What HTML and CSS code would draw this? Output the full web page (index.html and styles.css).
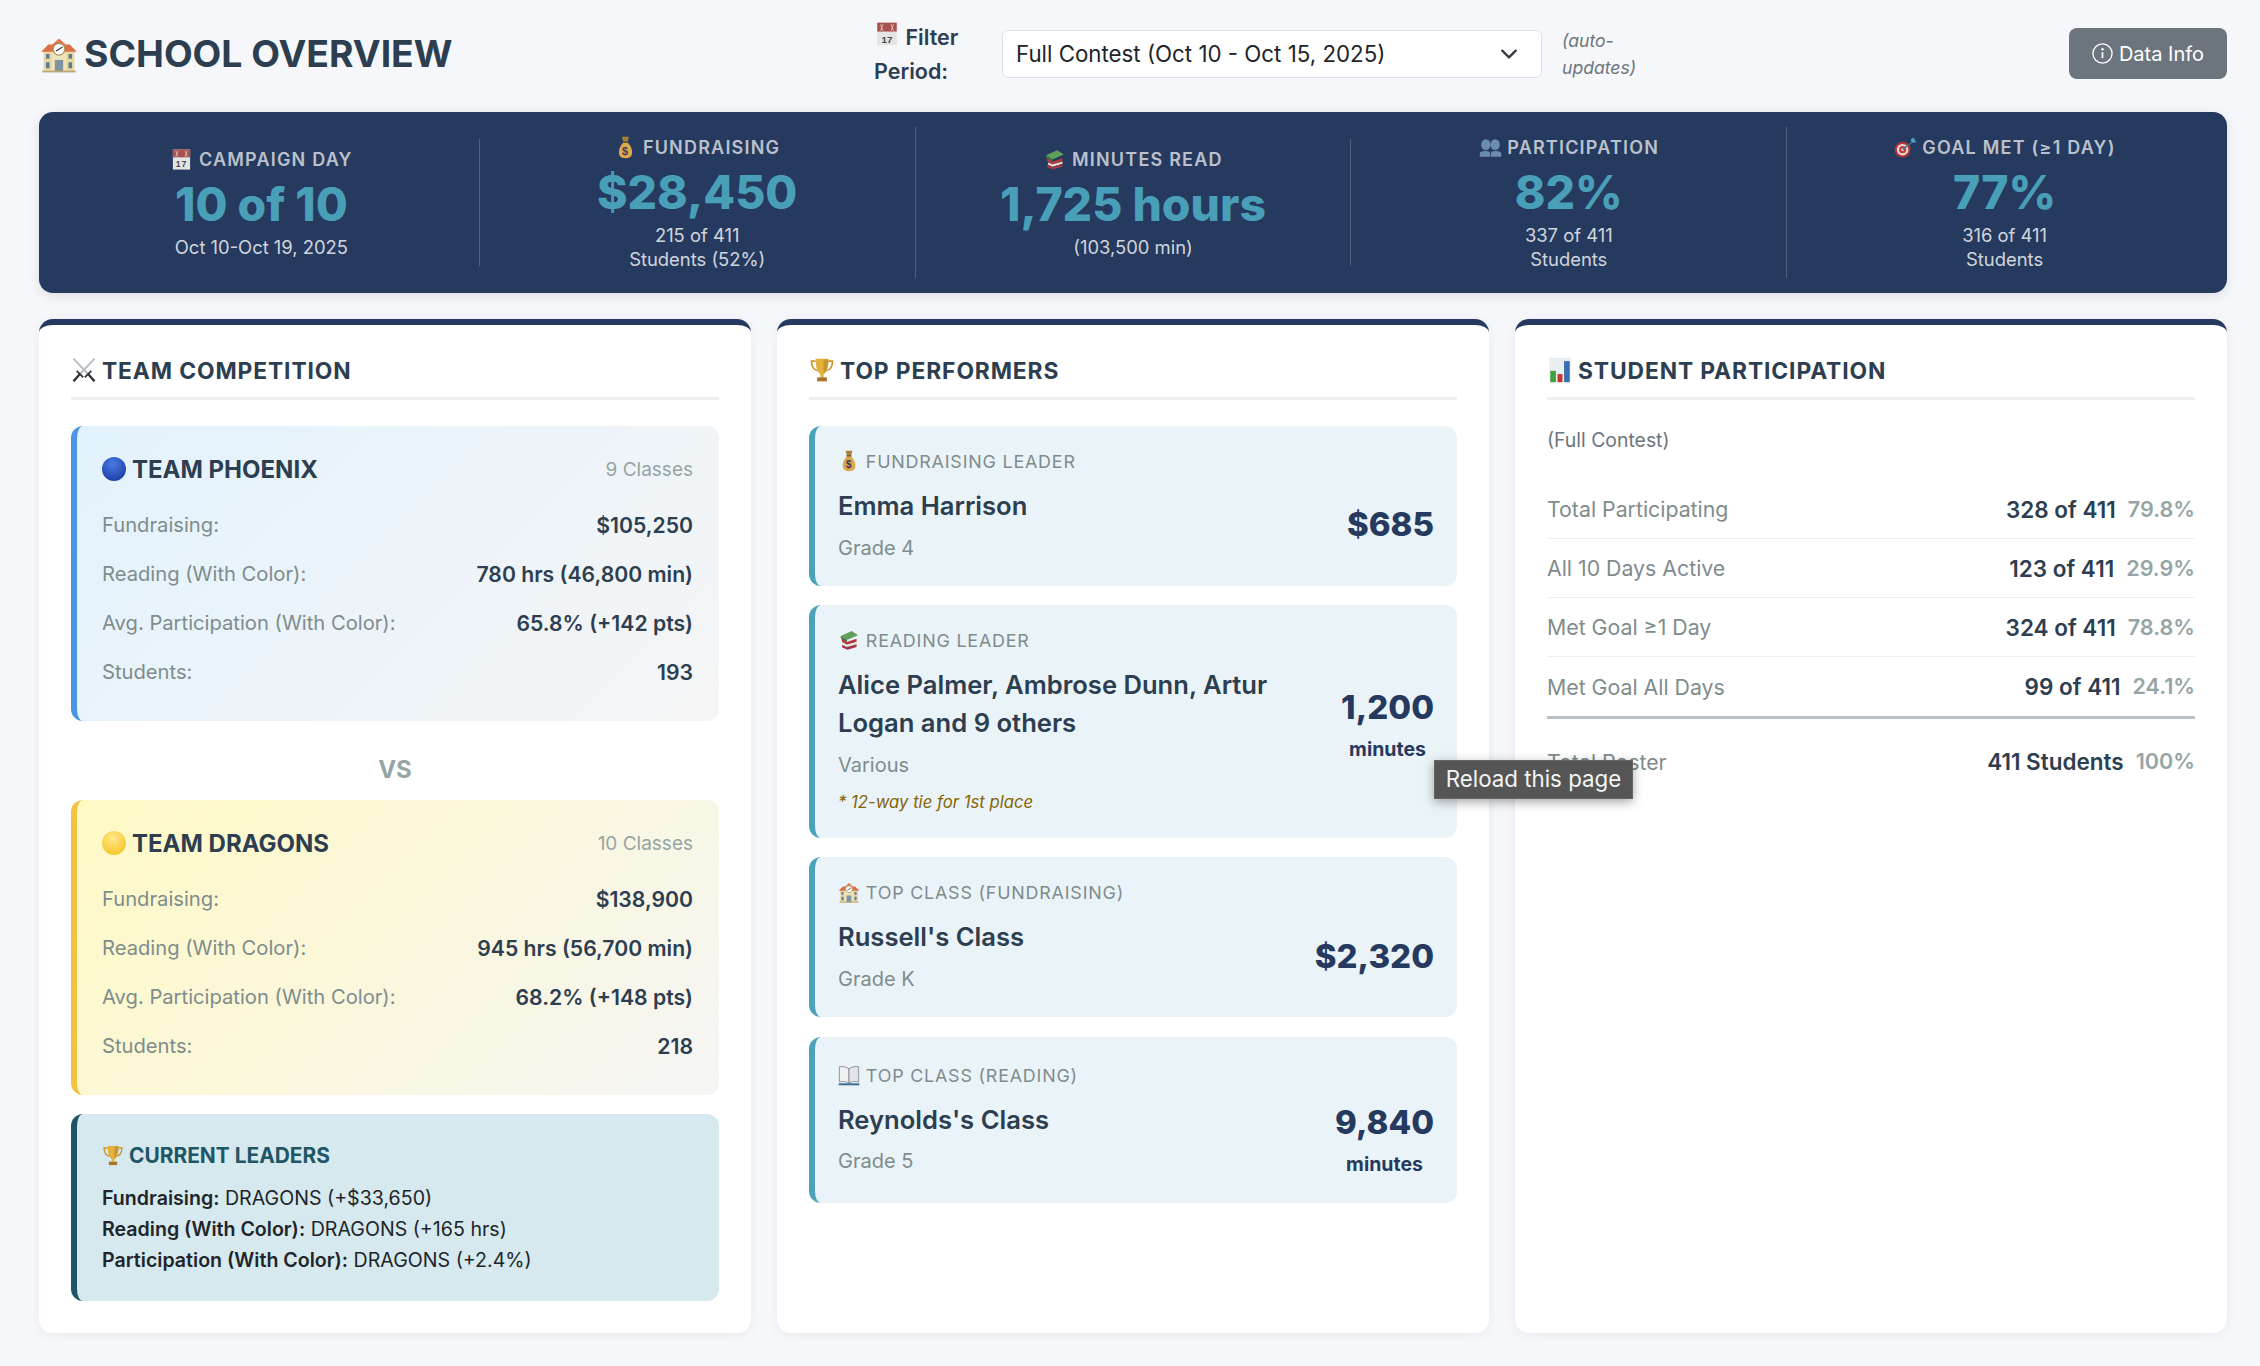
FILE: index.html
```html
<!DOCTYPE html>
<html lang="en">
<head>
  <meta charset="UTF-8">
  <title>School Overview</title>
  <link rel="stylesheet" href="styles.css">
</head>
<body>

<svg class="sprite" xmlns="http://www.w3.org/2000/svg">
  <symbol id="i-school" viewBox="0 0 32 32">
    <rect x="3" y="13" width="26" height="18" fill="#e8d9a4"/>
    <rect x="10" y="9" width="12" height="22" fill="#f0e4ba"/>
    <path d="M1 14 L7 8 H25 L31 14 Z" fill="#dc6f45"/>
    <path d="M8 10 L16 3 L24 10 Z" fill="#e07a4e"/>
    <circle cx="16" cy="12" r="5" fill="#fff" stroke="#a88f58"/>
    <path d="M16 12 L19 10 M16 12 L13.500 13.500" stroke="#333" stroke-width="1"/>
    <path d="M5 16h3v4H5zM5 23h3v5H5zM24 16h3v4h-3zM24 23h3v5h-3z" fill="#5f7d92"/>
    <rect x="12.500" y="21" width="7" height="10" fill="#7f93a0"/>
    <rect x="2" y="30" width="28" height="1.500" fill="#b9a874"/>
  </symbol>
  <symbol id="i-calendar" viewBox="0 0 32 32">
    <rect x="4" y="2" width="24" height="28" fill="#e4e4e4"/>
    <rect x="4" y="2" width="24" height="11" fill="#a8524f"/>
    <path d="M8 12 L11 4 M11 12 L8 4 M21 12 L24 4 M24 12 L21 4" stroke="#e8c9c6" stroke-width="1"/>
    <text x="16" y="26.500" font-size="12" text-anchor="middle" fill="#444" font-family="Liberation Sans">17</text>
  </symbol>
  <symbol id="i-bag" viewBox="0 0 32 32">
    <path d="M11 1 L21 1 L19 8 L13 8 Z" fill="#a9803a"/>
    <path d="M13 9 H19 C24 14 26 20 25 25 C24 29 21 31 16 31 C11 31 8 29 7 25 C6 20 8 14 13 9 Z" fill="#d9a94a"/>
    <rect x="12.500" y="7.500" width="7" height="2" fill="#6f5226"/>
    <text x="16" y="26" font-size="15" font-weight="700" text-anchor="middle" fill="#3a3f5c" font-family="Liberation Sans">$</text>
  </symbol>
  <symbol id="i-books" viewBox="0 0 32 32">
    <path d="M4 10 L20 3 L29 9 L13 16 Z" fill="#5fa05a"/>
    <path d="M4 10 L13 16 V19 L4 13 Z" fill="#2f7a46"/>
    <path d="M5 13 L13 19 L27 14 V19 L13 23 L6 19 Z" fill="#b5393a"/>
    <path d="M7 20 L13 23 L27 19 V22 L13 26 L7 23 Z" fill="#ece8e2"/>
    <path d="M6 23 L13 26 L27 22 V26 L14 30 L6 27 Z" fill="#9c3a4c"/>
  </symbol>
  <symbol id="i-people" viewBox="0 0 32 32">
    <g fill="#6b8bb0">
      <ellipse cx="9.500" cy="12" rx="6.500" ry="7.500"/>
      <path d="M1 29 V25 C1 22 5 21 9.500 21 C14 21 15.500 22 15.500 25 V29 Z"/>
      <ellipse cx="22.500" cy="12" rx="6.500" ry="7.500"/>
      <path d="M16.500 29 V25 C16.500 22 18 21 22.500 21 C27 21 31 22 31 25 V29 Z"/>
    </g>
  </symbol>
  <symbol id="i-dart" viewBox="0 0 32 32">
    <circle cx="12" cy="19" r="11" fill="#b8333a"/>
    <circle cx="12" cy="19" r="8" fill="#ecdcd8"/>
    <circle cx="12" cy="19" r="5" fill="#c23a3a"/>
    <circle cx="12" cy="19" r="2" fill="#f0e8e6"/>
    <path d="M12 19 L26 8" stroke="#45748a" stroke-width="2"/>
    <path d="M23 5 L25 9 L31 9 L27 2 Z" fill="#4f9fbd"/>
  </symbol>
  <symbol id="i-swords" viewBox="0 0 32 32">
    <path d="M3 2 L21 21 M29 2 L11 21" stroke="#b9bfc6" stroke-width="2.600"/>
    <path d="M17 25 L25 17 M15 25 L7 17" stroke="#33373c" stroke-width="2.200"/>
    <path d="M21 21 L29 30 M11 21 L3 30" stroke="#33373c" stroke-width="2.800"/>
  </symbol>
  <symbol id="i-trophy" viewBox="0 0 32 32">
    <path d="M8 5 H3 C3 12 6 16 11 17 M24 5 H29 C29 12 26 16 21 17" fill="none" stroke="#c8962e" stroke-width="2"/>
    <path d="M8 2 H24 C24 13 21 19 18 21 V25 H14 V21 C11 19 8 13 8 2 Z" fill="#e3b23c"/>
    <path d="M18 3 H24 C24 13 21 19 18 21 Z" fill="#c8962e"/>
    <rect x="10" y="25" width="12" height="5" fill="#a8742a"/>
  </symbol>
  <symbol id="i-chart" viewBox="0 0 32 32">
    <rect x="3" y="1" width="26" height="30" fill="#e8eef2"/>
    <rect x="4" y="17" width="7" height="14" fill="#45a142"/>
    <rect x="13" y="21" width="6" height="10" fill="#c8352c"/>
    <rect x="21" y="5" width="7" height="26" fill="#3a6fb0"/>
  </symbol>
  <symbol id="i-open-book" viewBox="0 0 32 32">
    <path d="M1 28 H31 V31 H1 Z" fill="#3f6f9a"/>
    <path d="M2 4 C7 3 12 4 16 7 V28 C12 25 7 25 2 26 Z" fill="#eef0f2" stroke="#6a7078"/>
    <path d="M30 4 C25 3 20 4 16 7 V28 C20 25 25 25 30 26 Z" fill="#e2e4e8" stroke="#6a7078"/>
  </symbol>
</svg>

<header class="topbar">
  <h1 class="page-title"><svg class="icon icon-title"><use href="#i-school"/></svg>SCHOOL OVERVIEW</h1>
  <div class="filter">
    <label class="filter-label" for="period"><svg class="icon icon-filter"><use href="#i-calendar"/></svg> Filter Period:</label>
    <div class="select-wrap">
      <select id="period" class="period-select">
        <option>Full Contest (Oct 10 - Oct 15, 2025)</option>
      </select>
      <svg class="chevron" viewBox="0 0 16 16"><path d="M2 5l6 6 6-6" fill="none" stroke="#343a40" stroke-width="2" stroke-linecap="round" stroke-linejoin="round"/></svg>
    </div>
    <small class="filter-note">(auto-updates)</small>
  </div>
  <button class="info-btn">
    <svg class="info-icon" viewBox="0 0 16 16"><circle cx="8" cy="8" r="7.300" fill="none" stroke="currentColor" stroke-width="1"/><path d="M8 7v4.500" stroke="currentColor" stroke-width="1.300"/><circle cx="8" cy="4.800" r=".9" fill="currentColor"/></svg>
    Data Info
  </button>
</header>

<section class="stats">
  <div class="stat">
    <div class="stat-label"><svg class="icon"><use href="#i-calendar"/></svg> CAMPAIGN DAY</div>
    <div class="stat-value">10 of 10</div>
    <div class="stat-sub">Oct 10-Oct 19, 2025</div>
  </div>
  <div class="stat">
    <div class="stat-label"><svg class="icon"><use href="#i-bag"/></svg> FUNDRAISING</div>
    <div class="stat-value">$28,450</div>
    <div class="stat-sub">215 of 411<br>Students (52%)</div>
  </div>
  <div class="stat">
    <div class="stat-label"><svg class="icon"><use href="#i-books"/></svg> MINUTES READ</div>
    <div class="stat-value">1,725 hours</div>
    <div class="stat-sub">(103,500 min)</div>
  </div>
  <div class="stat">
    <div class="stat-label"><svg class="icon"><use href="#i-people"/></svg> PARTICIPATION</div>
    <div class="stat-value">82%</div>
    <div class="stat-sub">337 of 411<br>Students</div>
  </div>
  <div class="stat">
    <div class="stat-label"><svg class="icon"><use href="#i-dart"/></svg> GOAL MET (≥1 DAY)</div>
    <div class="stat-value">77%</div>
    <div class="stat-sub">316 of 411<br>Students</div>
  </div>
</section>

<main class="columns">

  <section class="panel">
    <h2 class="panel-title"><svg class="icon icon-panel"><use href="#i-swords"/></svg>TEAM COMPETITION</h2>

    <div class="team team-phoenix">
      <div class="team-head">
        <span class="team-name"><span class="dot dot-blue"></span>TEAM PHOENIX</span>
        <span class="team-classes">9 Classes</span>
      </div>
      <div class="team-row"><span>Fundraising:</span><strong>$105,250</strong></div>
      <div class="team-row"><span>Reading (With Color):</span><strong>780 hrs (46,800 min)</strong></div>
      <div class="team-row"><span>Avg. Participation (With Color):</span><strong>65.8% (+142 pts)</strong></div>
      <div class="team-row"><span>Students:</span><strong>193</strong></div>
    </div>

    <div class="vs">VS</div>

    <div class="team team-dragons">
      <div class="team-head">
        <span class="team-name"><span class="dot dot-yellow"></span>TEAM DRAGONS</span>
        <span class="team-classes">10 Classes</span>
      </div>
      <div class="team-row"><span>Fundraising:</span><strong>$138,900</strong></div>
      <div class="team-row"><span>Reading (With Color):</span><strong>945 hrs (56,700 min)</strong></div>
      <div class="team-row"><span>Avg. Participation (With Color):</span><strong>68.2% (+148 pts)</strong></div>
      <div class="team-row"><span>Students:</span><strong>218</strong></div>
    </div>

    <div class="leaders">
      <div class="leaders-title"><svg class="icon icon-leaders"><use href="#i-trophy"/></svg>CURRENT LEADERS</div>
      <div class="leaders-row"><b>Fundraising:</b> DRAGONS (+$33,650)</div>
      <div class="leaders-row"><b>Reading (With Color):</b> DRAGONS (+165 hrs)</div>
      <div class="leaders-row"><b>Participation (With Color):</b> DRAGONS (+2.4%)</div>
    </div>
  </section>

  <section class="panel">
    <h2 class="panel-title"><svg class="icon icon-panel"><use href="#i-trophy"/></svg>TOP PERFORMERS</h2>

    <div class="perf">
      <div class="perf-info">
        <div class="perf-label"><svg class="icon"><use href="#i-bag"/></svg> FUNDRAISING LEADER</div>
        <div class="perf-name">Emma Harrison</div>
        <div class="perf-sub">Grade 4</div>
      </div>
      <div class="perf-score"><div class="perf-value">$685</div></div>
    </div>

    <div class="perf">
      <div class="perf-info">
        <div class="perf-label"><svg class="icon"><use href="#i-books"/></svg> READING LEADER</div>
        <div class="perf-name">Alice Palmer, Ambrose Dunn, Artur Logan and 9 others</div>
        <div class="perf-sub">Various</div>
        <div class="perf-tie">* 12-way tie for 1st place</div>
      </div>
      <div class="perf-score perf-score-tied"><div class="perf-value">1,200</div><div class="perf-unit">minutes</div></div>
    </div>

    <div class="perf">
      <div class="perf-info">
        <div class="perf-label"><svg class="icon"><use href="#i-school"/></svg> TOP CLASS (FUNDRAISING)</div>
        <div class="perf-name">Russell's Class</div>
        <div class="perf-sub">Grade K</div>
      </div>
      <div class="perf-score"><div class="perf-value">$2,320</div></div>
    </div>

    <div class="perf perf-last">
      <div class="perf-info">
        <div class="perf-label"><svg class="icon"><use href="#i-open-book"/></svg> TOP CLASS (READING)</div>
        <div class="perf-name">Reynolds's Class</div>
        <div class="perf-sub">Grade 5</div>
      </div>
      <div class="perf-score"><div class="perf-value">9,840</div><div class="perf-unit">minutes</div></div>
    </div>
  </section>

  <section class="panel">
    <h2 class="panel-title"><svg class="icon icon-panel"><use href="#i-chart"/></svg>STUDENT PARTICIPATION</h2>
    <div class="part-note">(Full Contest)</div>

    <div class="part-row"><span class="part-name">Total Participating</span><span class="part-nums"><strong>328 of 411</strong><em>79.8%</em></span></div>
    <div class="part-row"><span class="part-name">All 10 Days Active</span><span class="part-nums"><strong>123 of 411</strong><em>29.9%</em></span></div>
    <div class="part-row"><span class="part-name">Met Goal ≥1 Day</span><span class="part-nums"><strong>324 of 411</strong><em>78.8%</em></span></div>
    <div class="part-row part-row-end"><span class="part-name">Met Goal All Days</span><span class="part-nums"><strong>99 of 411</strong><em>24.1%</em></span></div>
    <div class="part-row part-total"><span class="part-name">Total Roster</span><span class="part-nums"><strong>411 Students</strong><em>100%</em></span></div>
  </section>

</main>

<div class="tooltip">Reload this page</div>

</body>
</html>
```

FILE: styles.css
```css
* {
  box-sizing: border-box;
}
body {
  margin: 0;
  padding: 28px 33px 32px 39px;
  font-family: Inter, "Noto Sans", sans-serif;
  background-color: #f5f7fb;
  color: #2c3e50;
}
.sprite {
  display: none;
}
.icon {
  width: 20px;
  height: 20px;
  vertical-align: -3px;
}

/* top bar */
.topbar {
  display: flex;
  align-items: center;
  height: 51px;
}
.page-title {
  flex: 0 0 835px;
  display: flex;
  align-items: center;
  gap: 5px;
  margin: 0;
  font-size: 37.300px;
  font-weight: 700;
  color: #2c3e50;
}
.icon-title {
  width: 40px;
  height: 38px;
}
.filter {
  display: flex;
  align-items: center;
}
.filter-label {
  width: 128px;
  font-size: 21.500px;
  font-weight: 600;
  line-height: 34px;
}
.icon-filter {
  width: 26px;
  height: 26px;
  vertical-align: -2px;
}
.select-wrap {
  position: relative;
  width: 540px;
}
.period-select {
  width: 100%;
  height: 48px;
  padding: 0 13px;
  border: 1px solid #dee2e6;
  border-radius: 6px;
  background: #fff;
  font: 400 22.300px Inter, sans-serif;
  color: #212529;
  appearance: none;
}
.chevron {
  position: absolute;
  right: 24px;
  top: 15px;
  width: 18px;
  height: 18px;
}
.filter-note {
  width: 100px;
  margin-left: 20px;
  font-size: 17.600px;
  font-style: italic;
  line-height: 27px;
  color: #6c757d;
}
.info-btn {
  margin-left: auto;
  width: 158px;
  height: 51px;
  display: flex;
  align-items: center;
  justify-content: center;
  gap: 6px;
  border: 0;
  border-radius: 8px;
  background: #6c757d;
  color: #fff;
  font: 400 20px Inter, sans-serif;
}
.info-icon {
  width: 21px;
  height: 21px;
}

/* stats banner */
.stats {
  display: flex;
  align-items: center;
  height: 181px;
  margin-top: 33px;
  padding: 0 5px;
  background: #253a5e;
  border-radius: 14px;
  box-shadow: 0 3px 12px rgba(0,0,0,0.1);
}
.stat {
  flex: 1;
  padding: 9px 0 7px;
  text-align: center;
  border-right: 1px solid rgba(255,255,255,0.2);
}
.stat:last-child {
  border-right: 0;
}
.stat-label {
  height: 24px;
  font-size: 18px;
  font-weight: 600;
  letter-spacing: 1.200px;
  line-height: 24px;
  color: rgba(255,255,255,0.7);
}
.stat-label .icon {
  width: 23px;
  height: 23px;
  vertical-align: -5px;
}
.stat-value {
  margin-top: 5px;
  font-size: 46.300px;
  font-weight: 800;
  line-height: 55px;
  color: #4a9fb8;
}
.stat-sub {
  margin-top: 3px;
  font-size: 18.400px;
  line-height: 24px;
  color: rgba(255,255,255,0.8);
}

/* panels */
.columns {
  display: grid;
  grid-template-columns: repeat(3, 1fr);
  gap: 26px;
  margin-top: 26px;
}
.panel {
  padding: 26px 32px 32px;
  background: #fff;
  border-top: 6px solid #253a5e;
  border-radius: 14px;
  box-shadow: 0 2px 12px rgba(0,0,0,0.06);
}
.panel-title {
  height: 49px;
  margin: 0 0 26px;
  padding-bottom: 6px;
  border-bottom: 3px solid #ecf0f1;
  font-size: 22.800px;
  font-weight: 700;
  letter-spacing: 0.900px;
  line-height: 40px;
  color: #2c3e50;
}
.icon-panel {
  width: 26px;
  height: 26px;
  margin-right: 5px;
  vertical-align: -4px;
}

/* teams */
.team {
  padding: 25px 26px 25px 25px;
  border-left: 6px solid;
  border-radius: 12px;
}
.team-phoenix {
  border-left-color: #4a94ea;
  background: linear-gradient(135deg, #e3f2fd, #f5f5f5);
}
.team-dragons {
  margin-bottom: 19px;
  border-left-color: #f6c043;
  background: linear-gradient(135deg, #fff9c4, #f5f5f5);
}
.team-head {
  display: flex;
  justify-content: space-between;
  align-items: center;
  height: 36px;
  margin-bottom: 13px;
}
.team-name {
  display: flex;
  align-items: center;
  gap: 6px;
  font-size: 24px;
  font-weight: 700;
}
.dot {
  width: 24px;
  height: 24px;
  border-radius: 50%;
}
.dot-blue {
  background: radial-gradient(circle at 45% 30%, #4a7be0, #1d3fa8 80%);
}
.dot-yellow {
  background: radial-gradient(circle at 45% 30%, #ffe88a, #f6c62a 80%);
}
.team-classes {
  font-size: 19px;
  color: #95a5a6;
}
.team-row {
  display: flex;
  justify-content: space-between;
  align-items: center;
  height: 49px;
  font-size: 20.200px;
  color: #7f8c8d;
}
.team-row strong {
  font-size: 21.200px;
  font-weight: 600;
  color: #2c3e50;
}
.vs {
  margin: 34px 0 15px;
  font-size: 24px;
  font-weight: 700;
  line-height: 30px;
  text-align: center;
  color: #95a5a6;
}
.leaders {
  padding: 27px 26px 25px 25px;
  border-left: 6px solid #1f5666;
  border-radius: 12px;
  background: #d5e9ef;
  color: #212529;
}
.leaders-title {
  height: 30px;
  margin-bottom: 12px;
  font-size: 20.900px;
  font-weight: 700;
  line-height: 30px;
  color: #1f5666;
}
.icon-leaders {
  width: 22px;
  height: 23px;
  margin-right: 5px;
  vertical-align: -4px;
}
.leaders-row {
  font-size: 19.600px;
  line-height: 31px;
}
.leaders-row b {
  font-weight: 600;
}

/* top performers */
.perf {
  display: flex;
  justify-content: space-between;
  align-items: center;
  gap: 20px;
  margin-bottom: 19.700px;
  padding: 24px 23px;
  border-left: 6px solid #4aa3ba;
  border-radius: 12px;
  background: #eaf3f8;
}
.perf-last {
  margin-bottom: 0;
}
.perf-label {
  height: 24px;
  font-size: 17.900px;
  letter-spacing: 0.800px;
  line-height: 24px;
  color: #7f8c8d;
}
.perf-label .icon {
  width: 22px;
  height: 22px;
  vertical-align: -4px;
}
.perf-name {
  margin-top: 13px;
  font-size: 25.600px;
  font-weight: 600;
  line-height: 38px;
  color: #2c3e50;
}
.perf-sub {
  margin-top: 8.500px;
  font-size: 20px;
  line-height: 28px;
  color: #7f8c8d;
}
.perf-tie {
  margin-top: 11px;
  font-size: 16.700px;
  font-style: italic;
  line-height: 24px;
  color: #856404;
}
.perf-score {
  flex: none;
  margin-top: 37px;
  text-align: center;
}
.perf-score-tied {
  margin-top: 4px;
}
.perf-value {
  font-size: 33px;
  font-weight: 800;
  line-height: 48px;
  text-align: right;
  color: #253a5e;
}
.perf-unit {
  margin-top: 4px;
  font-size: 19.500px;
  font-weight: 700;
  line-height: 29px;
  color: #253a5e;
}

/* participation */
.part-note {
  height: 28px;
  margin-bottom: 26px;
  font-size: 19.400px;
  line-height: 28px;
  color: #6c757d;
}
.part-row {
  display: flex;
  justify-content: space-between;
  align-items: center;
  height: 59px;
  border-bottom: 1px solid #ecf0f1;
  font-size: 21.300px;
}
.part-row-end {
  height: 62px;
  border-bottom: 3px solid #b8c0c8;
}
.part-total {
  margin-top: 13px;
  border-bottom: 0;
}
.part-name {
  color: #7f8c8d;
}
.part-nums {
  display: flex;
  gap: 12px;
}
.part-nums strong {
  font-size: 22.500px;
  font-weight: 600;
  color: #2c3e50;
}
.part-nums em {
  font-size: 21.600px;
  font-style: normal;
  font-weight: 600;
  color: #95a5a6;
}

/* hover tooltip from the browser chrome */
.tooltip {
  position: absolute;
  left: 1434px;
  top: 760px;
  width: 199px;
  height: 39px;
  background: #555;
  border: 1px solid #666;
  box-shadow: 0 3px 10px rgba(0,0,0,0.35);
  font-size: 22.300px;
  line-height: 35px;
  text-align: center;
  color: #f4f4f4;
}
```
